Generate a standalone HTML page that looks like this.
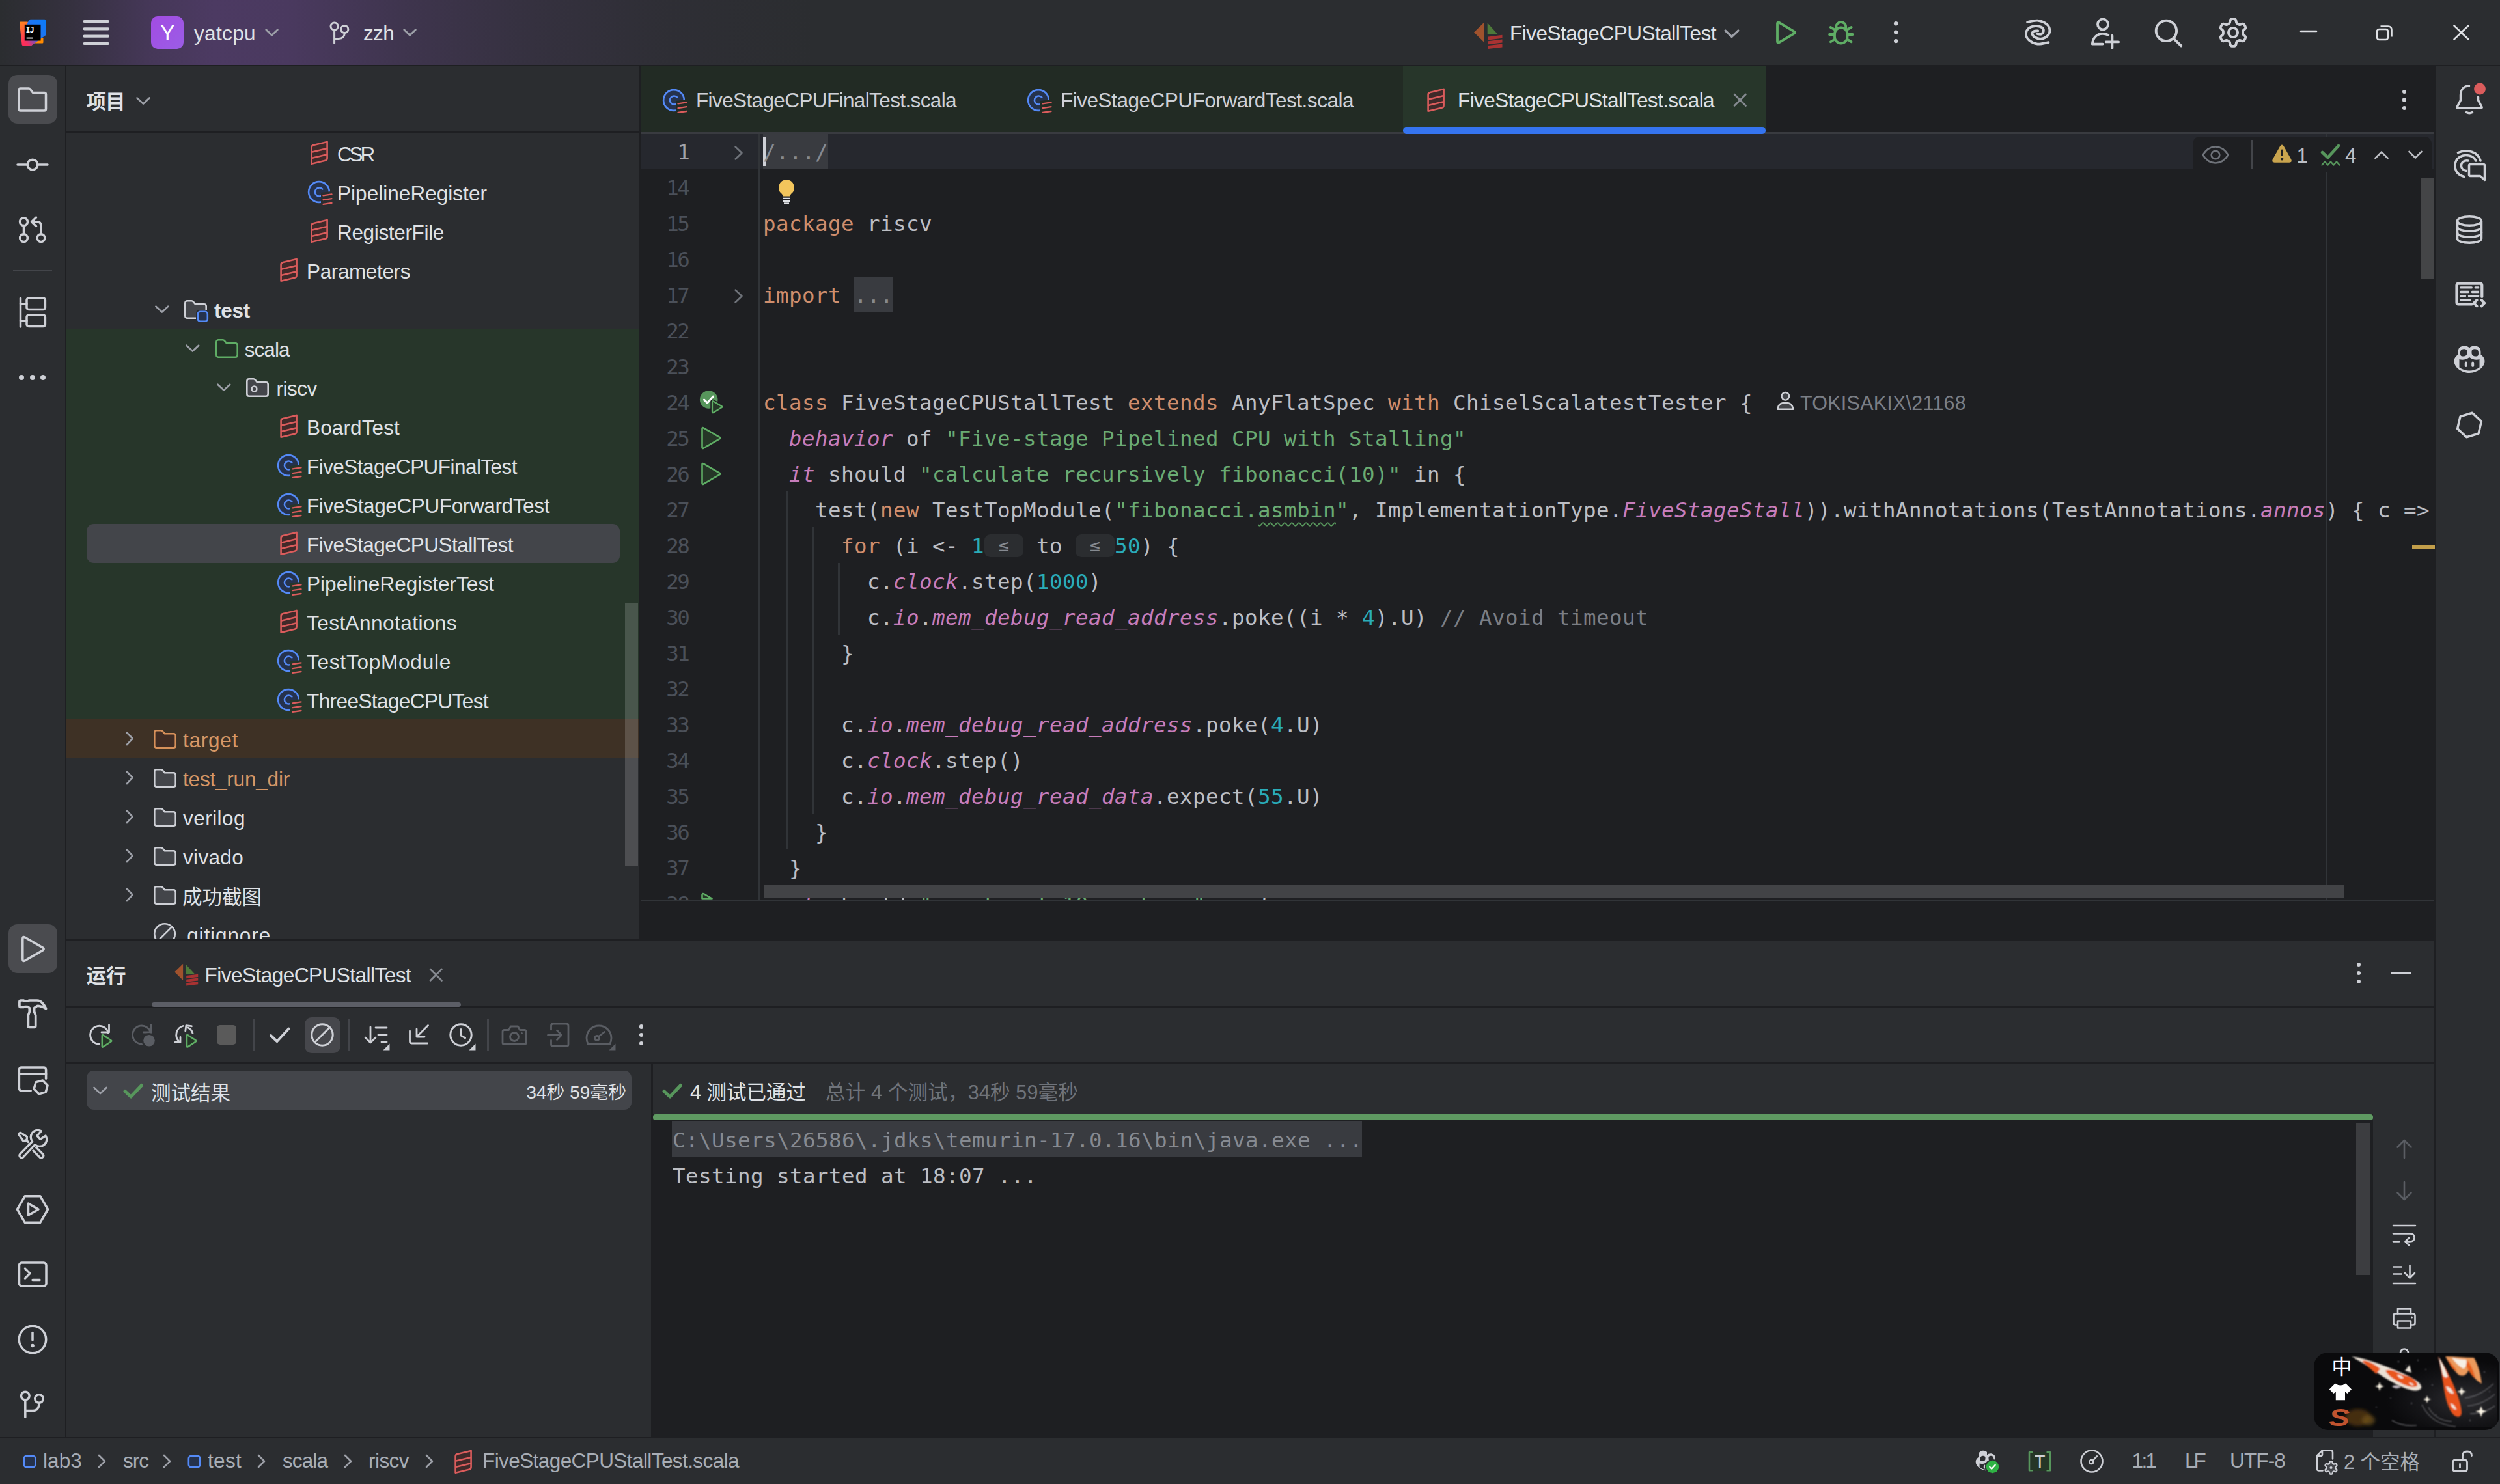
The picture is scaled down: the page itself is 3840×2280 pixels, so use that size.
<!DOCTYPE html>
<html lang="zh-CN"><head><meta charset="utf-8"><title>yatcpu – FiveStageCPUStallTest.scala</title><style>
html,body{margin:0;padding:0;background:#1e1f22;}
body{width:3840px;height:2280px;overflow:hidden;position:relative;font-family:'Liberation Sans','Noto Sans CJK SC',sans-serif;font-size:31.5px;color:#dfe1e5;}
#r{position:absolute;left:0;top:0;width:3840px;height:2280px;overflow:hidden;}
#r>*{position:absolute;}
#r>span{white-space:pre;line-height:40px;height:40px;}
.cl{white-space:pre;font-family:'DejaVu Sans Mono','Liberation Mono','Noto Sans CJK SC',monospace;font-size:32.5px;letter-spacing:0.433px;line-height:58.5px;height:55px;color:#bcbec4;}
.ln{letter-spacing:-2.4px}
.cl u{text-decoration:underline wavy #57965c 2px;text-underline-offset:7px;text-decoration-skip-ink:none}
.cl b.h{display:inline-block;width:60px;height:35px;line-height:33px;margin:0;vertical-align:3px;background:#2b2d30;border-radius:9px;color:#868a91;font-weight:normal;text-align:center;font-size:27px;letter-spacing:0;box-sizing:border-box}
.cl i{font-style:italic;color:#c77dbb;}
.k{color:#cf8e6d}.s{color:#6aab73}.n{color:#2aacb8}.c{color:#7a7e85}
svg{overflow:visible}
</style></head><body><div id="r">
<div style="left:0px;top:0px;width:3840px;height:100px;background:#2b2d30;"></div>
<div style="left:0px;top:0px;width:1300px;height:100px;background:linear-gradient(90deg,rgba(76,58,98,0) 0px,rgba(76,58,98,.300) 110px,rgba(76,58,98,.800) 230px,rgba(76,58,98,1) 330px,rgba(76,58,98,.940) 440px,rgba(76,58,98,.600) 620px,rgba(76,58,98,.300) 820px,rgba(76,58,98,.100) 1020px,rgba(76,58,98,0) 1250px);"></div>
<div style="left:0px;top:100px;width:3840px;height:2.7px;background:#1e1f22;"></div>
<div style="left:0px;top:102px;width:100px;height:2107px;background:#2b2d30;"></div>
<div style="left:100px;top:102px;width:2px;height:2107px;background:#1e1f22;"></div>
<div style="left:102px;top:102px;width:880px;height:1341px;background:#2b2d30;"></div>
<div style="left:102px;top:202px;width:880px;height:3px;background:#1e1f22;"></div>
<div style="left:982px;top:102px;width:3px;height:1343px;background:#1e1f22;"></div>
<div style="left:985px;top:102px;width:2754px;height:1343px;background:#1e1f22;"></div>
<div style="left:3739px;top:102px;width:2px;height:2107px;background:#1e1f22;"></div>
<div style="left:3741px;top:102px;width:99px;height:2107px;background:#2b2d30;"></div>
<div style="left:102px;top:1443px;width:3637px;height:3px;background:#1e1f22;"></div>
<div style="left:102px;top:1446px;width:3637px;height:763px;background:#2b2d30;"></div>
<div style="left:102px;top:1545px;width:3637px;height:3px;background:#1e1f22;"></div>
<div style="left:102px;top:1632px;width:3637px;height:3px;background:#1e1f22;"></div>
<div style="left:0px;top:2207.5px;width:3840px;height:3px;background:#1e1f22;"></div>
<div style="left:0px;top:2210px;width:3840px;height:70px;background:#2b2d30;"></div>
<svg style="left:24px;top:24px;" width="52" height="52" viewBox="0 0 52 52"><defs><linearGradient id="lg1" x1="0" y1="0" x2="0.3" y2="1"><stop offset="0" stop-color="#ff8a1a"/><stop offset=".45" stop-color="#ff5a3c"/><stop offset="1" stop-color="#ff2461"/></linearGradient>
<linearGradient id="lg2" x1="1" y1="0" x2="0" y2="1"><stop offset="0" stop-color="#087cfa"/><stop offset=".52" stop-color="#2472ee"/><stop offset=".72" stop-color="#a0459f"/><stop offset=".88" stop-color="#f5305f"/><stop offset="1" stop-color="#ff2d55"/></linearGradient></defs>
<path d="M7.5 9.5h10.5q1.5 0 1.8 1.5l6 33-2.5 2h-12q-1.5 0-1.7-1.5l-3.6-33q-.2-2 1.5-2z" fill="url(#lg1)"/>
<path d="M31 34h11.5v7q0 1.5-1.5 1.5h-11z" fill="#ff8a00"/>
<path d="M22.5 5.7h22q1.5 0 1.5 1.5v23l-22 16h-12l5-32q2-6 5.5-8.5z" fill="url(#lg2)"/>
<rect x="13.8" y="13.8" width="24.7" height="24.7" fill="#000"/>
<rect x="16.7" y="33.6" width="10.1" height="1.9" fill="#fff"/>
<text x="15.6" y="25.8" font-family="'DejaVu Sans Mono','Liberation Mono',monospace" font-weight="bold" font-size="11.5" fill="#fff" letter-spacing="-0.8">IJ</text></svg>
<svg style="left:120px;top:25px;" width="55" height="50" viewBox="0 0 55 50"><g stroke="#ced0d6" stroke-width="4.2" stroke-linecap="round"><path d="M9.5 8h36.5M9.5 19.3h36.5M9.5 30.7h36.5M9.5 42h36.5"/></g></svg>
<div style="left:232px;top:25px;width:50px;height:50px;background:linear-gradient(135deg,#a24ce2,#9b5de6);border-radius:10px;"></div>
<span style="top:31.07px;font-size:33px;color:#fff;left:246.2px;">Y</span>
<span style="top:31.09px;font-size:31.5px;color:#dfe1e5;left:298px;letter-spacing:0.365px;">yatcpu</span>
<svg style="left:406.94px;top:44.34px;" width="21.12" height="12.32" viewBox="0 0 24 14"><path d="M2 2l10 9.500L22 2" fill="none" stroke="#9da0a8" stroke-width="3.200" stroke-linecap="round" stroke-linejoin="round"/></svg>
<svg style="left:500px;top:28px;" width="50" height="50" viewBox="0 0 50 50"><g fill="none" stroke="#ced0d6" stroke-width="3" stroke-linecap="round"><circle cx="13.6" cy="12.5" r="5.6"/><circle cx="29.3" cy="17" r="5.6"/><path d="M13.6 18.5v20M13.6 31.5h6.5q9 0 9.2-8.7"/></g></svg>
<span style="top:31.09px;font-size:31.5px;color:#dfe1e5;left:558px;letter-spacing:-0.673px;">zzh</span>
<svg style="left:619.44px;top:44.34px;" width="21.12" height="12.32" viewBox="0 0 24 14"><path d="M2 2l10 9.500L22 2" fill="none" stroke="#9da0a8" stroke-width="3.200" stroke-linecap="round" stroke-linejoin="round"/></svg>
<svg style="left:2262px;top:30px;" width="50" height="50" viewBox="0 0 50 50"><path d="M2 19.700L17.600 4.600v30.300z" fill="#a0522d"/><path d="M22.700 5.300l16.100 17.700h-16.100z" fill="#4e7a3a"/>
<g fill="#a83232"><path d="M23.700 26.500l21.800-2.700v5l-21.800 2.700z"/><path d="M23.700 33.300l21.800-2.700v5l-21.800 2.700z"/><path d="M23.700 40.100l21.800-2.700v5l-21.800 2.700z"/></g></svg>
<span style="top:31.09px;font-size:31.5px;color:#dfe1e5;left:2319px;letter-spacing:-0.494px;">FiveStageCPUStallTest</span>
<svg style="left:2648.0px;top:45.0px;" width="24.0" height="14.0" viewBox="0 0 24 14"><path d="M2 2l10 9.500L22 2" fill="none" stroke="#9da0a8" stroke-width="3.200" stroke-linecap="round" stroke-linejoin="round"/></svg>
<svg style="left:2720px;top:28px;" width="50" height="46" viewBox="0 0 50 46"><path d="M10 8.500v27q0 3.300 3 1.600l22.500-13.500q2.500-1.600 0-3.200l-22.500-13.500q-3-1.700-3 1.600z" fill="none" stroke="#5fad65" stroke-width="3.800" stroke-linejoin="round"/></svg>
<svg style="left:2802px;top:24.5px;" width="52" height="50" viewBox="0 0 52 50"><g fill="none" stroke="#5fad65" stroke-width="3.800" stroke-linecap="round"><rect x="16" y="17.500" width="19.500" height="24" rx="9.700"/>
<path d="M18.300 19.500v-3a7.500 7.500 0 0 1 15 0v3"/><path d="M15.500 28h-7.500M36 28h7.500M15.800 20.300l-6-3.300M35.700 20.300l6-3.300M16 35.500l-6.200 3.800M35.500 35.500l6.200 3.800"/></g></svg>
<svg style="left:2908.1000000000004px;top:32.199999999999996px;" width="8.4" height="35.3" viewBox="0 0 8.4 35.3"><circle cx="4.2" cy="4.2" r="3.2" fill="#ced0d6"/><circle cx="4.2" cy="17.599999999999998" r="3.2" fill="#ced0d6"/><circle cx="4.2" cy="31.099999999999998" r="3.2" fill="#ced0d6"/></svg>
<svg style="left:3105px;top:26px;" width="50" height="50" viewBox="0 0 50 50"><g fill="none" stroke="#ced0d6" stroke-width="3.800" stroke-linecap="round"><path d="M9.10 8.10C11.68 7.68 19.62 5.05 24.60 5.60C29.58 6.15 35.88 9.00 39.00 11.40C42.12 13.80 43.07 17.13 43.30 20.00C43.53 22.87 42.57 26.32 40.40 28.60C38.23 30.88 33.53 33.22 30.30 33.70C27.07 34.18 23.28 32.70 21.00 31.50C18.72 30.30 16.97 28.05 16.60 26.50C16.23 24.95 17.35 23.05 18.80 22.20C20.25 21.35 24.22 21.53 25.30 21.40"/><path d="M24.60 26.10C25.55 26.17 28.75 27.28 30.30 26.50C31.85 25.72 33.78 23.15 33.90 21.40C34.02 19.65 33.15 17.20 31.00 16.00C28.85 14.80 24.35 13.90 21.00 14.20C17.65 14.50 13.25 15.75 10.90 17.80C8.55 19.85 6.78 23.50 6.90 26.50C7.02 29.50 8.65 33.28 11.60 35.80C14.55 38.32 19.62 41.05 24.60 41.60C29.58 42.15 38.68 39.52 41.50 39.10"/></g></svg>
<svg style="left:3206px;top:24px;" width="56" height="56" viewBox="0 0 56 56"><g fill="none" stroke="#ced0d6" stroke-width="3.800" stroke-linecap="round" stroke-linejoin="round"><circle cx="24" cy="13.400" r="8"/><path d="M32.300 29.900C29.500 28.400 26.500 27.800 23.600 27.800 14 27.800 8.500 35 7.800 43.600h15.800"/><path d="M38.400 30.700v19.400M28.700 40.400h19.400"/></g></svg>
<svg style="left:3305px;top:26px;" width="54" height="54" viewBox="0 0 54 54"><g fill="none" stroke="#ced0d6" stroke-width="3.900" stroke-linecap="round"><circle cx="22.400" cy="21.400" r="15.700"/><path d="M34 33.600l11.400 10.900"/></g></svg>
<svg style="left:3403px;top:23px;" width="54" height="54" viewBox="0 0 54 54"><g fill="none" stroke="#ced0d6" stroke-width="3.900" stroke-linejoin="round"><path d="M42.10 27.00 L42.10 27.66 L42.10 28.32 L42.15 28.99 L42.38 29.71 L43.08 30.56 L44.39 31.66 L45.63 32.87 L46.15 33.97 L46.14 34.93 L45.89 35.81 L45.53 36.65 L45.10 37.45 L44.62 38.22 L44.07 38.96 L43.44 39.61 L42.61 40.10 L41.40 40.19 L39.73 39.73 L38.13 39.14 L37.04 38.97 L36.30 39.12 L35.69 39.42 L35.12 39.74 L34.55 40.08 L33.98 40.40 L33.41 40.74 L32.85 41.12 L32.34 41.68 L31.95 42.71 L31.66 44.39 L31.23 46.07 L30.54 47.07 L29.70 47.54 L28.82 47.76 L27.91 47.87 L27.00 47.90 L26.09 47.87 L25.18 47.76 L24.30 47.54 L23.46 47.07 L22.77 46.07 L22.34 44.39 L22.05 42.71 L21.66 41.68 L21.15 41.12 L20.59 40.74 L20.02 40.40 L19.45 40.08 L18.88 39.74 L18.31 39.42 L17.70 39.12 L16.96 38.97 L15.87 39.14 L14.27 39.73 L12.60 40.19 L11.39 40.10 L10.56 39.61 L9.93 38.96 L9.38 38.22 L8.90 37.45 L8.47 36.65 L8.11 35.81 L7.86 34.93 L7.85 33.97 L8.37 32.87 L9.61 31.66 L10.92 30.56 L11.62 29.71 L11.85 28.99 L11.90 28.32 L11.90 27.66 L11.90 27.00 L11.90 26.34 L11.90 25.68 L11.85 25.01 L11.62 24.29 L10.92 23.44 L9.61 22.34 L8.37 21.13 L7.85 20.03 L7.86 19.07 L8.11 18.19 L8.47 17.35 L8.90 16.55 L9.38 15.78 L9.93 15.04 L10.56 14.39 L11.39 13.90 L12.60 13.81 L14.27 14.27 L15.87 14.86 L16.96 15.03 L17.70 14.88 L18.31 14.58 L18.88 14.26 L19.45 13.92 L20.02 13.60 L20.59 13.26 L21.15 12.88 L21.66 12.32 L22.05 11.29 L22.34 9.61 L22.77 7.93 L23.46 6.93 L24.30 6.46 L25.18 6.24 L26.09 6.13 L27.00 6.10 L27.91 6.13 L28.82 6.24 L29.70 6.46 L30.54 6.93 L31.23 7.93 L31.66 9.61 L31.95 11.29 L32.34 12.32 L32.85 12.88 L33.41 13.26 L33.98 13.60 L34.55 13.92 L35.12 14.26 L35.69 14.58 L36.30 14.88 L37.04 15.03 L38.13 14.86 L39.73 14.27 L41.40 13.81 L42.61 13.90 L43.44 14.39 L44.07 15.04 L44.62 15.78 L45.10 16.55 L45.53 17.35 L45.89 18.19 L46.14 19.07 L46.15 20.03 L45.63 21.13 L44.39 22.34 L43.08 23.44 L42.38 24.29 L42.15 25.01 L42.10 25.68 L42.10 26.34z"/><circle cx="27" cy="27" r="7.100"/></g></svg>
<svg style="left:3530px;top:40px;" width="32" height="16" viewBox="0 0 32 16"><path d="M4 8h24" stroke="#dfe1e5" stroke-width="2.600" stroke-linecap="round"/></svg>
<svg style="left:3644px;top:34px;" width="36" height="32" viewBox="0 0 36 32"><g fill="none" stroke="#dfe1e5" stroke-width="2.600"><rect x="7" y="11" width="17" height="16" rx="3.500"/><path d="M12.500 6.500H24q5.500 0 5.500 5.500v10.500"/></g></svg>
<svg style="left:3764px;top:34px;" width="34" height="32" viewBox="0 0 34 32"><path d="M5.500 5.500l22 21M27.500 5.500l-22 21" stroke="#dfe1e5" stroke-width="2.600" stroke-linecap="round"/></svg>
<div style="left:12.5px;top:115px;width:75px;height:75px;background:#4a4b4f;border-radius:14px;"></div>
<svg style="left:20px;top:123px;" width="60" height="60" viewBox="0 0 60 60"><g fill="none" stroke="#ced0d6" stroke-width="3.5" stroke-linecap="round" stroke-linejoin="round" ><path d="M9 15.500q0-2.500 2.500-2.500h12.500q1.500 0 2.300 1l4.200 5.500h17.500q2.500 0 2.500 2.500v22.500q0 2.500-2.500 2.500h-36.500q-2.500 0-2.500-2.500z"/></g></svg>
<svg style="left:20px;top:223px;" width="60" height="60" viewBox="0 0 60 60"><g fill="none" stroke="#ced0d6" stroke-width="3.5" stroke-linecap="round" stroke-linejoin="round" ><path d="M7 30h13.500M39.500 30h13.500"/><circle cx="30" cy="30" r="7.800"/></g></svg>
<svg style="left:20px;top:323px;" width="60" height="60" viewBox="0 0 60 60"><g fill="none" stroke="#ced0d6" stroke-width="3.5" stroke-linecap="round" stroke-linejoin="round" ><circle cx="16.500" cy="17.700" r="5.900"/><circle cx="16.500" cy="42.600" r="5.900"/><circle cx="43" cy="42.600" r="5.900"/><path d="M16.500 23.600v13.100"/><path d="M43 36.700v-13q0-6-6-6h-7.500"/><path d="M35.500 11l-7 6.700l7 6.700"/></g></svg>
<div style="left:20px;top:415px;width:60px;height:2px;background:#43454a;"></div>
<svg style="left:20px;top:450px;" width="60" height="60" viewBox="0 0 60 60"><g fill="none" stroke="#ced0d6" stroke-width="3.5" stroke-linecap="round" stroke-linejoin="round" ><path d="M11.500 8v44"/><rect x="21" y="8" width="28.400" height="17.500" rx="3"/><rect x="21" y="34" width="28.400" height="17.500" rx="3"/><path d="M11.500 16.700h9.500M11.500 42.700h9.500"/></g></svg>
<div style="left:29.299999999999997px;top:575.7px;width:8px;height:8px;background:#ced0d6;border-radius:50%;"></div>
<div style="left:45.8px;top:575.7px;width:8px;height:8px;background:#ced0d6;border-radius:50%;"></div>
<div style="left:62.2px;top:575.7px;width:8px;height:8px;background:#ced0d6;border-radius:50%;"></div>
<div style="left:12.5px;top:1420px;width:75px;height:75px;background:#4a4b4f;border-radius:14px;"></div>
<svg style="left:20px;top:1427.5px;" width="60" height="60" viewBox="0 0 60 60"><g fill="none" stroke="#ced0d6" stroke-width="3.5" stroke-linecap="round" stroke-linejoin="round" ><path d="M14.800 14v32q0 3.800 3.400 2l27.500-16q3-2 0-4l-27.500-16q-3.400-1.800-3.400 2z"/></g></svg>
<svg style="left:20px;top:1528px;" width="60" height="60" viewBox="0 0 60 60"><g fill="none" stroke="#ced0d6" stroke-width="3.7" stroke-linecap="round" stroke-linejoin="round" ><path d="M12 9h3.900l2.100 1.100h4.300l2.700-1.100h11.900q4.500 0 7 2.900 3 3 4.900 6l1.800 3.700q-3-2-6.700-3.200-3-.9-5.400-1.100-1.200-.1-2.100.6l-3.800 2.700v5.900l2.100 5.400v16.600q0 2-2 2h-7.300q-2 0-2-2v-16.600l1.900-5.400v-5.900l-3-1.900h-4.300l-2.100.8h-3.900q-2.100 0-2.100-2.100v-6.300q0-2.100 2.100-2.100z"/></g></svg>
<svg style="left:20px;top:1629px;" width="60" height="60" viewBox="0 0 60 60"><g fill="none" stroke="#ced0d6" stroke-width="3.5" stroke-linecap="round" stroke-linejoin="round" ><path d="M27.200 46.800h-13.800q-4 0-4-4v-27.900q0-4 4-4h33.200q4 0 4 4v13.300"/><path d="M9.400 20.900h41.200"/><path d="M53.08 38.79 L50.10 49.17 L39.62 51.78 L32.12 44.01 L35.10 33.63 L45.58 31.02z"/></g></svg>
<svg style="left:20px;top:1728px;" width="60" height="60" viewBox="0 0 60 60"><g fill="none" stroke="#ced0d6" stroke-width="3.3" stroke-linecap="round" stroke-linejoin="round" ><path d="M43.400 9.700l-6.500 7.500 4.900 5.100 8.300-5.300a10.800 10.800 0 0 1-16.400 13.700l-17.800 18.900a3.400 3.400 0 0 1-5.100-4.600l18.800-19.200a10.800 10.800 0 0 1 13.800-16.100z"/><path d="M11.800 12.400l9.500 5.900v4l-1.900 2.200h-4.100l-6.200-9.200q-.8-2.300 2.700-2.900z"/><path d="M20.700 24l2.700 2.700"/><path d="M35.600 35l10.500 10.500a3.400 3.400 0 0 1-4.900 4.600l-10.200-10.200"/></g></svg>
<svg style="left:20px;top:1828px;" width="60" height="60" viewBox="0 0 60 60"><g fill="none" stroke="#ced0d6" stroke-width="3.5" stroke-linecap="round" stroke-linejoin="round" ><path d="M53.50 30.00 L41.75 50.35 L18.25 50.35 L6.50 30.00 L18.25 9.65 L41.75 9.65z" /><path d="M23.500 21v18l15.500-9z"/></g></svg>
<svg style="left:20px;top:1928px;" width="60" height="60" viewBox="0 0 60 60"><g fill="none" stroke="#ced0d6" stroke-width="3.5" stroke-linecap="round" stroke-linejoin="round" ><rect x="9.500" y="12" width="41.500" height="36" rx="4"/><path d="M18.500 21l7.500 7.500-7.500 7.500M30 38.500h11"/></g></svg>
<svg style="left:20px;top:2028px;" width="60" height="60" viewBox="0 0 60 60"><g fill="none" stroke="#ced0d6" stroke-width="3.5" stroke-linecap="round" stroke-linejoin="round" ><circle cx="30" cy="30" r="20.700"/><path d="M30 19.500v11.500"/></g><circle cx="30" cy="39.500" r="2.800" fill="#ced0d6"/></svg>
<svg style="left:20px;top:2128px;" width="60" height="60" viewBox="0 0 60 60"><g fill="none" stroke="#ced0d6" stroke-width="3.5" stroke-linecap="round" stroke-linejoin="round" ><circle cx="18.800" cy="16.500" r="6.300"/><circle cx="40" cy="21" r="6.300"/><path d="M18.800 23v26.500M18.800 39.500h12q9 0 9.200-12"/></g></svg>
<svg style="left:3763px;top:122px;" width="60" height="60" viewBox="0 0 60 60"><g fill="none" stroke="#ced0d6" stroke-width="3.5" stroke-linecap="round" stroke-linejoin="round" ><path d="M29.500 10c-8.500 0-13 6-13 14.500v7.500l-5.500 10.500q-.5 1.500 1 1.500h36q1.500 0 1-1.500l-5.500-10.500v-5"/><path d="M25.500 50.500q4.500 2.500 9 0"/></g><circle cx="46" cy="14.500" r="9" fill="#db5c5c"/></svg>
<svg style="left:3763px;top:225px;" width="60" height="60" viewBox="0 0 60 60"><g fill="none" stroke="#ced0d6" stroke-width="3.5" stroke-linecap="round" stroke-linejoin="round" ><path d="M12.500 9.500c14-6 31-1.500 34.500 12.500"/><path d="M22 46.500c-9.500-2.500-14-9-14-17 0-11.500 10.500-18 21.500-15.500 5 1.200 8.500 4 10.500 8"/><path d="M25.500 37.500c-5-.5-8-4-8-8 0-5.500 5.500-8.500 10.500-7.500"/><path d="M31.500 27.500h20q2 0 2 2v22l-7-6h-15q-2 0-2-2v-14q0-2 2-2z" fill="#2b2d30"/></g></svg>
<svg style="left:3763px;top:323px;" width="60" height="60" viewBox="0 0 60 60"><g fill="none" stroke="#ced0d6" stroke-width="3.5" stroke-linecap="round" stroke-linejoin="round" ><ellipse cx="30" cy="16.500" rx="18.500" ry="6.800"/><path d="M11.500 16.500v27c0 4 8.300 6.800 18.500 6.800s18.500-2.800 18.500-6.800v-27"/><path d="M11.500 25.500c0 4 8.300 6.800 18.500 6.800s18.500-2.800 18.500-6.800M11.500 34.500c0 4 8.300 6.800 18.500 6.800s18.500-2.800 18.500-6.800"/></g></svg>
<svg style="left:3763px;top:422px;" width="60" height="60" viewBox="0 0 60 60"><g fill="none" stroke="#ced0d6" stroke-width="4.2" stroke-linecap="round" stroke-linejoin="round" ><path d="M33.800 45.500h-20.300q-3 0-3-3v-25.900q0-3 3-3h32.800q3 0 3 3v17.400"/></g><g fill="none" stroke="#ced0d6" stroke-width="3.3" stroke-linecap="round" stroke-linejoin="round" ><path d="M16.800 19.900h16.500M39.200 19.900h4.500M16.800 26.500h11.600M34.300 26.500h9.400M16.800 32.800h6.700M29.400 32.800h14.300M16.800 39.200h14.500"/></g><g fill="none" stroke="#ced0d6" stroke-width="4" stroke-linecap="round" stroke-linejoin="round" ><path d="M41.500 39l-4.700 4.700 4.700 4.700M48.500 39l4.700 4.700-4.700 4.700"/></g></svg>
<svg style="left:3763px;top:523px;" width="60" height="60" viewBox="0 0 60 60"><path d="M30 11.500c3-3 7-3.500 11-2.500 5 1.300 6.500 4.500 6.500 9.500v3.500c3 2 6 5.500 6 9.500 0 11-13 18.500-23.500 18.500s-23.500-7.500-23.500-18.500c0-4 3-7.500 6-9.500v-3.500c0-5 1.500-8.200 6.500-9.500 4-1 8-.5 11 2.500z" fill="#ced0d6"/><path d="M20 13.500c3.500-.8 6.500.3 6.500 3.500v2.500c0 3-2.500 5-6.500 5-3.500 0-4-1.800-4-5 0-3.500.8-5.200 4-6zM40 13.500c-3.500-.8-6.500.3-6.500 3.500v2.500c0 3 2.500 5 6.500 5 3.500 0 4-1.800 4-5 0-3.500-.8-5.200-4-6z" fill="#2b2d30"/><path d="M14.500 29c4.500 1.500 11.500.5 15.500-3 4 3.500 11 4.500 15.500 3v12.500c-4.500 3.500-10.500 5-15.500 5s-11-1.500-15.500-5z" fill="#2b2d30"/><rect x="22.800" y="32.500" width="4" height="8.500" rx="2" fill="#ced0d6"/><rect x="33.200" y="32.500" width="4" height="8.500" rx="2" fill="#ced0d6"/></svg>
<svg style="left:3763px;top:623px;" width="60" height="60" viewBox="0 0 60 60"><g fill="none" stroke="#ced0d6" stroke-width="3.5" stroke-linecap="round" stroke-linejoin="round" ><path d="M48.36 24.39 L44.04 43.09 L25.68 48.71 L11.64 35.61 L15.96 16.91 L34.32 11.29z"/></g></svg>
<span style="top:135.93px;font-size:30.5px;color:#dfe1e5;left:132.5px;font-weight:bold;letter-spacing:-1.000px;">项目</span>
<svg style="left:208px;top:148px;" width="24" height="14" viewBox="0 0 24 14"><path d="M2.500 2.500l9.500 9 9.500-9" fill="none" stroke="#9da0a8" stroke-width="2.800" stroke-linecap="round" stroke-linejoin="round"/></svg>
<div style="left:102px;top:505px;width:880px;height:600px;background:#27362a;"></div>
<div style="left:102px;top:1105px;width:880px;height:60px;background:#3e3125;"></div>
<div style="left:133px;top:805px;width:819px;height:60px;background:#43454a;border-radius:11px;"></div>
<svg style="left:476px;top:216px;" width="30" height="38" viewBox="0 0 30 38"><path d="M2.600 10.500q0-3 3-3.400l21-5.200v25q0 3.200-3.200 3.800l-20.800 5.100z" fill="#402929" stroke="#db5c5c" stroke-width="2.600" stroke-linejoin="round"/><path d="M2.600 17.800l24-5.800M2.600 27l24-5.800" stroke="#db5c5c" stroke-width="2.600" fill="none"/></svg>
<span style="top:217.09px;font-size:31.5px;color:#dfe1e5;left:518px;letter-spacing:-4.169px;">CSR</span>
<svg style="left:469.7px;top:264px;" width="46" height="60" viewBox="0 0 46 60"><circle cx="20" cy="31" r="15.900" fill="#25324d" stroke="#548af7" stroke-width="2.600"/><path d="M25.300 26.500a6.600 6.600 0 1 0 0 9" fill="none" stroke="#548af7" stroke-width="2.500" stroke-linecap="round"/><path d="M23 32l18-2.300v20l-18 2.300z" fill="#2b2d30"/><g stroke="#db5c5c" stroke-width="2.300" stroke-linecap="round"><path d="M26.500 36.300l13-1.900M26.500 43.100l13-1.900M26.500 49.900l13-1.900"/></g></svg>
<span style="top:277.09px;font-size:31.5px;color:#dfe1e5;left:518px;letter-spacing:0.039px;">PipelineRegister</span>
<svg style="left:476px;top:336px;" width="30" height="38" viewBox="0 0 30 38"><path d="M2.600 10.500q0-3 3-3.400l21-5.200v25q0 3.200-3.200 3.800l-20.800 5.100z" fill="#402929" stroke="#db5c5c" stroke-width="2.600" stroke-linejoin="round"/><path d="M2.600 17.800l24-5.800M2.600 27l24-5.800" stroke="#db5c5c" stroke-width="2.600" fill="none"/></svg>
<span style="top:337.09px;font-size:31.5px;color:#dfe1e5;left:518px;letter-spacing:-0.338px;">RegisterFile</span>
<svg style="left:429.2px;top:396px;" width="30" height="38" viewBox="0 0 30 38"><path d="M2.600 10.500q0-3 3-3.400l21-5.200v25q0 3.200-3.200 3.800l-20.800 5.100z" fill="#402929" stroke="#db5c5c" stroke-width="2.600" stroke-linejoin="round"/><path d="M2.600 17.800l24-5.800M2.600 27l24-5.800" stroke="#db5c5c" stroke-width="2.600" fill="none"/></svg>
<span style="top:397.09px;font-size:31.5px;color:#dfe1e5;left:471px;letter-spacing:-0.381px;">Parameters</span>
<svg style="left:429.2px;top:636px;" width="30" height="38" viewBox="0 0 30 38"><path d="M2.600 10.500q0-3 3-3.400l21-5.200v25q0 3.200-3.200 3.800l-20.800 5.100z" fill="#402929" stroke="#db5c5c" stroke-width="2.600" stroke-linejoin="round"/><path d="M2.600 17.800l24-5.800M2.600 27l24-5.800" stroke="#db5c5c" stroke-width="2.600" fill="none"/></svg>
<span style="top:637.09px;font-size:31.5px;color:#dfe1e5;left:471px;letter-spacing:0.130px;">BoardTest</span>
<svg style="left:422.7px;top:684px;" width="46" height="60" viewBox="0 0 46 60"><circle cx="20" cy="31" r="15.900" fill="#25324d" stroke="#548af7" stroke-width="2.600"/><path d="M25.300 26.500a6.600 6.600 0 1 0 0 9" fill="none" stroke="#548af7" stroke-width="2.500" stroke-linecap="round"/><path d="M23 32l18-2.300v20l-18 2.300z" fill="#27362a"/><g stroke="#db5c5c" stroke-width="2.300" stroke-linecap="round"><path d="M26.500 36.300l13-1.900M26.500 43.100l13-1.900M26.500 49.900l13-1.900"/></g></svg>
<span style="top:697.09px;font-size:31.5px;color:#dfe1e5;left:471px;letter-spacing:-0.542px;">FiveStageCPUFinalTest</span>
<svg style="left:422.7px;top:744px;" width="46" height="60" viewBox="0 0 46 60"><circle cx="20" cy="31" r="15.900" fill="#25324d" stroke="#548af7" stroke-width="2.600"/><path d="M25.300 26.500a6.600 6.600 0 1 0 0 9" fill="none" stroke="#548af7" stroke-width="2.500" stroke-linecap="round"/><path d="M23 32l18-2.300v20l-18 2.300z" fill="#27362a"/><g stroke="#db5c5c" stroke-width="2.300" stroke-linecap="round"><path d="M26.500 36.300l13-1.900M26.500 43.100l13-1.900M26.500 49.900l13-1.900"/></g></svg>
<span style="top:757.09px;font-size:31.5px;color:#dfe1e5;left:471px;letter-spacing:-0.375px;">FiveStageCPUForwardTest</span>
<svg style="left:429.2px;top:816px;" width="30" height="38" viewBox="0 0 30 38"><path d="M2.600 10.500q0-3 3-3.400l21-5.200v25q0 3.200-3.200 3.800l-20.800 5.100z" fill="#402929" stroke="#db5c5c" stroke-width="2.600" stroke-linejoin="round"/><path d="M2.600 17.800l24-5.800M2.600 27l24-5.800" stroke="#db5c5c" stroke-width="2.600" fill="none"/></svg>
<span style="top:817.09px;font-size:31.5px;color:#dfe1e5;left:471px;letter-spacing:-0.494px;">FiveStageCPUStallTest</span>
<svg style="left:422.7px;top:864px;" width="46" height="60" viewBox="0 0 46 60"><circle cx="20" cy="31" r="15.900" fill="#25324d" stroke="#548af7" stroke-width="2.600"/><path d="M25.300 26.500a6.600 6.600 0 1 0 0 9" fill="none" stroke="#548af7" stroke-width="2.500" stroke-linecap="round"/><path d="M23 32l18-2.300v20l-18 2.300z" fill="#27362a"/><g stroke="#db5c5c" stroke-width="2.300" stroke-linecap="round"><path d="M26.500 36.300l13-1.900M26.500 43.100l13-1.900M26.500 49.900l13-1.900"/></g></svg>
<span style="top:877.09px;font-size:31.5px;color:#dfe1e5;left:471px;letter-spacing:0.043px;">PipelineRegisterTest</span>
<svg style="left:429.2px;top:936px;" width="30" height="38" viewBox="0 0 30 38"><path d="M2.600 10.500q0-3 3-3.400l21-5.200v25q0 3.200-3.200 3.800l-20.800 5.100z" fill="#402929" stroke="#db5c5c" stroke-width="2.600" stroke-linejoin="round"/><path d="M2.600 17.800l24-5.800M2.600 27l24-5.800" stroke="#db5c5c" stroke-width="2.600" fill="none"/></svg>
<span style="top:937.09px;font-size:31.5px;color:#dfe1e5;left:471px;letter-spacing:0.457px;">TestAnnotations</span>
<svg style="left:422.7px;top:984px;" width="46" height="60" viewBox="0 0 46 60"><circle cx="20" cy="31" r="15.900" fill="#25324d" stroke="#548af7" stroke-width="2.600"/><path d="M25.300 26.500a6.600 6.600 0 1 0 0 9" fill="none" stroke="#548af7" stroke-width="2.500" stroke-linecap="round"/><path d="M23 32l18-2.300v20l-18 2.300z" fill="#27362a"/><g stroke="#db5c5c" stroke-width="2.300" stroke-linecap="round"><path d="M26.500 36.300l13-1.900M26.500 43.100l13-1.900M26.500 49.900l13-1.900"/></g></svg>
<span style="top:997.09px;font-size:31.5px;color:#dfe1e5;left:471px;letter-spacing:0.779px;">TestTopModule</span>
<svg style="left:422.7px;top:1044px;" width="46" height="60" viewBox="0 0 46 60"><circle cx="20" cy="31" r="15.900" fill="#25324d" stroke="#548af7" stroke-width="2.600"/><path d="M25.300 26.500a6.600 6.600 0 1 0 0 9" fill="none" stroke="#548af7" stroke-width="2.500" stroke-linecap="round"/><path d="M23 32l18-2.300v20l-18 2.300z" fill="#27362a"/><g stroke="#db5c5c" stroke-width="2.300" stroke-linecap="round"><path d="M26.500 36.300l13-1.900M26.500 43.100l13-1.900M26.500 49.900l13-1.900"/></g></svg>
<span style="top:1057.09px;font-size:31.5px;color:#dfe1e5;left:471px;letter-spacing:-0.581px;">ThreeStageCPUTest</span>
<svg style="left:237.5px;top:469px;" width="22" height="14" viewBox="0 0 22 14"><path d="M1.500 1.800l9.300 8.800 9.300-8.800" fill="none" stroke="#9da0a8" stroke-width="2.700" stroke-linecap="round" stroke-linejoin="round"/></svg>
<svg style="left:282.7px;top:459.8px;" width="40" height="40" viewBox="0 0 40 40"><path d="M1.300 5.500q0-3.200 3.200-3.200h6.800q1.500 0 2.400 1.100l3.300 3.900h13.500q3.200 0 3.200 3.200v15q0 3.200-3.200 3.200h-26q-3.200 0-3.200-3.200z" fill="#43454a" stroke="#ced0d6" stroke-width="2.600" stroke-linejoin="round"/><rect x="18" y="16" width="20" height="20" rx="5" fill="#2b2d30"/><rect x="20.800" y="18.800" width="15" height="15" rx="3.800" fill="#25324d" stroke="#548af7" stroke-width="2.600"/></svg>
<span style="top:457.09px;font-size:31.5px;color:#dfe1e5;left:329px;font-weight:bold;letter-spacing:-0.254px;">test</span>
<svg style="left:284.5px;top:529px;" width="22" height="14" viewBox="0 0 22 14"><path d="M1.500 1.800l9.300 8.800 9.300-8.800" fill="none" stroke="#9da0a8" stroke-width="2.700" stroke-linecap="round" stroke-linejoin="round"/></svg>
<svg style="left:330.8px;top:519.8px;" width="40" height="40" viewBox="0 0 40 40"><path d="M1.300 5.500q0-3.200 3.200-3.200h6.800q1.500 0 2.400 1.100l3.300 3.900h13.500q3.200 0 3.200 3.200v15q0 3.200-3.200 3.200h-26q-3.200 0-3.200-3.200z" fill="#223326" stroke="#5fad65" stroke-width="2.600" stroke-linejoin="round"/></svg>
<span style="top:517.09px;font-size:31.5px;color:#dfe1e5;left:375.7px;letter-spacing:-0.907px;">scala</span>
<svg style="left:332.5px;top:589px;" width="22" height="14" viewBox="0 0 22 14"><path d="M1.500 1.800l9.300 8.800 9.300-8.800" fill="none" stroke="#9da0a8" stroke-width="2.700" stroke-linecap="round" stroke-linejoin="round"/></svg>
<svg style="left:378.0px;top:579.8px;" width="40" height="40" viewBox="0 0 40 40"><path d="M1.300 5.500q0-3.200 3.200-3.200h6.800q1.500 0 2.400 1.100l3.300 3.900h13.500q3.200 0 3.200 3.200v15q0 3.200-3.200 3.200h-26q-3.200 0-3.200-3.200z" fill="#43454a" stroke="#ced0d6" stroke-width="2.600" stroke-linejoin="round"/><circle cx="12.500" cy="17.500" r="3.900" fill="none" stroke="#ced0d6" stroke-width="2.500"/></svg>
<span style="top:577.09px;font-size:31.5px;color:#dfe1e5;left:424.6px;letter-spacing:-0.548px;">riscv</span>
<svg style="left:192.5px;top:1124px;" width="14" height="22" viewBox="0 0 14 22"><path d="M1.800 1.500l8.800 9.300-8.800 9.300" fill="none" stroke="#9da0a8" stroke-width="2.700" stroke-linecap="round" stroke-linejoin="round"/></svg>
<svg style="left:235.8px;top:1119.8px;" width="40" height="40" viewBox="0 0 40 40"><path d="M1.300 5.500q0-3.200 3.200-3.200h6.800q1.500 0 2.400 1.100l3.300 3.900h13.500q3.200 0 3.200 3.200v15q0 3.200-3.200 3.200h-26q-3.200 0-3.200-3.200z" fill="#402c24" stroke="#d6905a" stroke-width="2.600" stroke-linejoin="round"/></svg>
<span style="top:1117.09px;font-size:31.5px;color:#d69766;left:281px;letter-spacing:0.742px;">target</span>
<svg style="left:192.5px;top:1184px;" width="14" height="22" viewBox="0 0 14 22"><path d="M1.800 1.500l8.800 9.300-8.800 9.300" fill="none" stroke="#9da0a8" stroke-width="2.700" stroke-linecap="round" stroke-linejoin="round"/></svg>
<svg style="left:235.8px;top:1179.8px;" width="40" height="40" viewBox="0 0 40 40"><path d="M1.300 5.500q0-3.200 3.200-3.200h6.800q1.500 0 2.400 1.100l3.300 3.900h13.500q3.200 0 3.200 3.200v15q0 3.200-3.200 3.200h-26q-3.200 0-3.200-3.200z" fill="#43454a" stroke="#ced0d6" stroke-width="2.600" stroke-linejoin="round"/></svg>
<span style="top:1177.09px;font-size:31.5px;color:#d69766;left:281px;letter-spacing:-0.195px;">test_run_dir</span>
<svg style="left:192.5px;top:1244px;" width="14" height="22" viewBox="0 0 14 22"><path d="M1.800 1.500l8.800 9.300-8.800 9.300" fill="none" stroke="#9da0a8" stroke-width="2.700" stroke-linecap="round" stroke-linejoin="round"/></svg>
<svg style="left:235.8px;top:1239.8px;" width="40" height="40" viewBox="0 0 40 40"><path d="M1.300 5.500q0-3.200 3.200-3.200h6.800q1.500 0 2.400 1.100l3.300 3.900h13.500q3.200 0 3.200 3.200v15q0 3.200-3.200 3.200h-26q-3.200 0-3.200-3.200z" fill="#43454a" stroke="#ced0d6" stroke-width="2.600" stroke-linejoin="round"/></svg>
<span style="top:1237.09px;font-size:31.5px;color:#dfe1e5;left:281px;letter-spacing:0.458px;">verilog</span>
<svg style="left:192.5px;top:1304px;" width="14" height="22" viewBox="0 0 14 22"><path d="M1.800 1.500l8.800 9.300-8.800 9.300" fill="none" stroke="#9da0a8" stroke-width="2.700" stroke-linecap="round" stroke-linejoin="round"/></svg>
<svg style="left:235.8px;top:1299.8px;" width="40" height="40" viewBox="0 0 40 40"><path d="M1.300 5.500q0-3.200 3.200-3.200h6.800q1.500 0 2.400 1.100l3.300 3.900h13.500q3.200 0 3.200 3.200v15q0 3.200-3.200 3.200h-26q-3.200 0-3.200-3.200z" fill="#43454a" stroke="#ced0d6" stroke-width="2.600" stroke-linejoin="round"/></svg>
<span style="top:1297.09px;font-size:31.5px;color:#dfe1e5;left:281px;letter-spacing:0.324px;">vivado</span>
<svg style="left:192.5px;top:1364px;" width="14" height="22" viewBox="0 0 14 22"><path d="M1.800 1.500l8.800 9.300-8.800 9.300" fill="none" stroke="#9da0a8" stroke-width="2.700" stroke-linecap="round" stroke-linejoin="round"/></svg>
<svg style="left:235.8px;top:1359.8px;" width="40" height="40" viewBox="0 0 40 40"><path d="M1.300 5.500q0-3.200 3.200-3.200h6.800q1.500 0 2.400 1.100l3.300 3.900h13.500q3.200 0 3.200 3.200v15q0 3.200-3.200 3.200h-26q-3.200 0-3.200-3.200z" fill="#43454a" stroke="#ced0d6" stroke-width="2.600" stroke-linejoin="round"/></svg>
<span style="top:1358.43px;font-size:30.5px;color:#dfe1e5;left:280px;letter-spacing:0.000px;">成功截图</span>
<div style="left:102px;top:1404px;width:880px;height:39px;overflow:hidden;"><svg style="position:absolute;left:132px;top:12px" width="40" height="40" viewBox="0 0 40 40"><circle cx="19" cy="19" r="15.800" fill="#393b40" stroke="#ced0d6" stroke-width="2.600"/><path d="M8 30l22-22" stroke="#ced0d6" stroke-width="2.600"/></svg><span style="position:absolute;left:175.500px;top:12.800px;line-height:40px;white-space:pre;letter-spacing:0.900px;">.gitignore</span></div>
<div style="left:960px;top:926px;width:20px;height:404px;background:rgba(255,255,255,0.160);"></div>
<div style="left:985px;top:102px;width:1170px;height:101px;background:#222b24;"></div>
<div style="left:2155px;top:102px;width:557px;height:101px;background:#27362a;"></div>
<div style="left:985px;top:203px;width:2754px;height:2.5px;background:#393b40;"></div>
<div style="left:2155px;top:195px;width:557px;height:10.5px;background:#3574f0;border-radius:5px;"></div>
<svg style="left:1015px;top:122.5px;" width="46" height="60" viewBox="0 0 46 60"><circle cx="20" cy="31" r="15.900" fill="#25324d" stroke="#548af7" stroke-width="2.600"/><path d="M25.300 26.500a6.600 6.600 0 1 0 0 9" fill="none" stroke="#548af7" stroke-width="2.500" stroke-linecap="round"/><path d="M23 32l18-2.300v20l-18 2.300z" fill="#222b24"/><g stroke="#db5c5c" stroke-width="2.300" stroke-linecap="round"><path d="M26.500 36.300l13-1.900M26.500 43.100l13-1.900M26.500 49.900l13-1.900"/></g></svg>
<span style="top:134.09px;font-size:31.5px;color:#ced0d6;left:1069px;letter-spacing:-0.617px;">FiveStageCPUFinalTest.scala</span>
<svg style="left:1574.5px;top:122.5px;" width="46" height="60" viewBox="0 0 46 60"><circle cx="20" cy="31" r="15.900" fill="#25324d" stroke="#548af7" stroke-width="2.600"/><path d="M25.300 26.500a6.600 6.600 0 1 0 0 9" fill="none" stroke="#548af7" stroke-width="2.500" stroke-linecap="round"/><path d="M23 32l18-2.300v20l-18 2.300z" fill="#222b24"/><g stroke="#db5c5c" stroke-width="2.300" stroke-linecap="round"><path d="M26.500 36.300l13-1.900M26.500 43.100l13-1.900M26.500 49.900l13-1.900"/></g></svg>
<span style="top:134.09px;font-size:31.5px;color:#ced0d6;left:1629px;letter-spacing:-0.480px;">FiveStageCPUForwardTest.scala</span>
<svg style="left:2191px;top:135px;" width="30" height="38" viewBox="0 0 30 38"><path d="M2.600 10.500q0-3 3-3.400l21-5.200v25q0 3.200-3.200 3.800l-20.800 5.100z" fill="#402929" stroke="#db5c5c" stroke-width="2.600" stroke-linejoin="round"/><path d="M2.600 17.800l24-5.800M2.600 27l24-5.800" stroke="#db5c5c" stroke-width="2.600" fill="none"/></svg>
<span style="top:134.09px;font-size:31.5px;color:#dfe1e5;left:2239px;letter-spacing:-0.580px;">FiveStageCPUStallTest.scala</span>
<svg style="left:2660px;top:141px;" width="26" height="26" viewBox="0 0 26 26"><path d="M4 4l17.500 17.500M21.500 4l-17.500 17.500" stroke="#868a91" stroke-width="2.600" stroke-linecap="round"/></svg>
<div style="left:3689.8px;top:137.8px;width:6.4px;height:6.4px;background:#ced0d6;border-radius:50%;"></div>
<div style="left:3689.8px;top:150.3px;width:6.4px;height:6.4px;background:#ced0d6;border-radius:50%;"></div>
<div style="left:3689.8px;top:162.8px;width:6.4px;height:6.4px;background:#ced0d6;border-radius:50%;"></div>
<div style="left:985px;top:206px;width:2754px;height:54px;background:#26282e;"></div>
<div style="left:1165px;top:206px;width:2.6px;height:1176px;background:#313438;"></div>
<div style="left:3572px;top:206px;width:3px;height:1176px;background:#313438;"></div>
<div style="left:1171.5px;top:206px;width:100.5px;height:54px;background:#393b40;"></div>
<div style="left:1312px;top:425px;width:60px;height:55px;background:#393b40;"></div>
<div style="left:1171.5px;top:210px;width:5.3px;height:45px;background:#ced0d6;"></div>
<div style="left:3368px;top:210px;width:367px;height:55px;background:#1e1f22;border-radius:11px 11px 0 0;"></div>
<svg style="left:3380px;top:220px;" width="46" height="36" viewBox="0 0 46 36"><g fill="none" stroke="#6f737a" stroke-width="2.600"><path d="M3.500 18c5-8 12-12.500 19.500-12.500s14.500 4.500 19.500 12.500c-5 8-12 12.500-19.500 12.500s-14.500-4.500-19.500-12.500z"/><circle cx="23" cy="18" r="6.300"/></g></svg>
<div style="left:3458px;top:215px;width:3px;height:45px;background:#43454a;"></div>
<svg style="left:3488px;top:220px;" width="34" height="32" viewBox="0 0 34 32"><path d="M14.200 4.500q2.800-4 5.600 0l11.500 20.500q1.800 4.500-3 4.700h-22.600q-4.800-.200-3-4.700z" fill="#c9a44e"/><rect x="15.300" y="9.500" width="3.600" height="10.500" rx="1.800" fill="#1e1f22"/><circle cx="17.100" cy="24.200" r="2.300" fill="#1e1f22"/></svg>
<span style="top:219.09px;font-size:31.5px;color:#bcbec4;left:3527.5px;">1</span>
<svg style="left:3562px;top:220px;" width="36" height="38" viewBox="0 0 36 38"><path d="M5 14l8.500 8 16.500-18" fill="none" stroke="#57965c" stroke-width="4.600" stroke-linecap="round" stroke-linejoin="round"/><path d="M4.500 35l4.500-5 4.500 5 4.500-5 4.500 5 4.500-5 4.500 5" fill="none" stroke="#57965c" stroke-width="2.400" stroke-linecap="round" stroke-linejoin="round" transform="translate(0,-1.500)"/></svg>
<span style="top:219.09px;font-size:31.5px;color:#bcbec4;left:3602px;">4</span>
<svg style="left:3646px;top:230px;" width="24" height="16" viewBox="0 0 24 16"><path d="M2.500 13l9.500-9.500 9.500 9.500" fill="none" stroke="#bcbec4" stroke-width="2.700" stroke-linecap="round" stroke-linejoin="round"/></svg>
<svg style="left:3698px;top:230px;" width="24" height="16" viewBox="0 0 24 16"><path d="M2.500 3l9.500 9.500 9.500-9.500" fill="none" stroke="#bcbec4" stroke-width="2.700" stroke-linecap="round" stroke-linejoin="round"/></svg>
<div style="left:3717.8px;top:272.5px;width:20.6px;height:155.5px;background:#444547;"></div>
<div style="left:3705px;top:838px;width:35px;height:4.5px;background:#c29e4a;"></div>
<div style="left:985px;top:206px;width:72.500px;height:1177px;overflow:hidden"><div class="cl ln" style="position:absolute;right:0;top:-1px;color:#a1a3ab">1</div><div class="cl ln" style="position:absolute;right:0;top:54px;color:#4b5059">14</div><div class="cl ln" style="position:absolute;right:0;top:109px;color:#4b5059">15</div><div class="cl ln" style="position:absolute;right:0;top:164px;color:#4b5059">16</div><div class="cl ln" style="position:absolute;right:0;top:219px;color:#4b5059">17</div><div class="cl ln" style="position:absolute;right:0;top:274px;color:#4b5059">22</div><div class="cl ln" style="position:absolute;right:0;top:329px;color:#4b5059">23</div><div class="cl ln" style="position:absolute;right:0;top:384px;color:#4b5059">24</div><div class="cl ln" style="position:absolute;right:0;top:439px;color:#4b5059">25</div><div class="cl ln" style="position:absolute;right:0;top:494px;color:#4b5059">26</div><div class="cl ln" style="position:absolute;right:0;top:549px;color:#4b5059">27</div><div class="cl ln" style="position:absolute;right:0;top:604px;color:#4b5059">28</div><div class="cl ln" style="position:absolute;right:0;top:659px;color:#4b5059">29</div><div class="cl ln" style="position:absolute;right:0;top:714px;color:#4b5059">30</div><div class="cl ln" style="position:absolute;right:0;top:769px;color:#4b5059">31</div><div class="cl ln" style="position:absolute;right:0;top:824px;color:#4b5059">32</div><div class="cl ln" style="position:absolute;right:0;top:879px;color:#4b5059">33</div><div class="cl ln" style="position:absolute;right:0;top:934px;color:#4b5059">34</div><div class="cl ln" style="position:absolute;right:0;top:989px;color:#4b5059">35</div><div class="cl ln" style="position:absolute;right:0;top:1044px;color:#4b5059">36</div><div class="cl ln" style="position:absolute;right:0;top:1099px;color:#4b5059">37</div><div class="cl ln" style="position:absolute;right:0;top:1154px;color:#4b5059">38</div></div>
<div style="left:1172px;top:206px;width:2567px;height:1177px;overflow:hidden"><div class="cl" style="position:absolute;left:0;top:-1px"><span class="c" style="color:#868a91">/.../</span></div><div class="cl" style="position:absolute;left:0;top:109px"><span class="k">package</span> riscv</div><div class="cl" style="position:absolute;left:0;top:219px"><span class="k">import</span> <span style="color:#868a91">...</span></div><div class="cl" style="position:absolute;left:0;top:384px"><span class="k">class</span> FiveStageCPUStallTest <span class="k">extends</span> AnyFlatSpec <span class="k">with</span> ChiselScalatestTester {</div><div class="cl" style="position:absolute;left:0;top:439px">  <i>behavior</i> of <span class="s">"Five-stage Pipelined CPU with Stalling"</span></div><div class="cl" style="position:absolute;left:0;top:494px">  <i>it</i> should <span class="s">"calculate recursively fibonacci(10)"</span> in {</div><div class="cl" style="position:absolute;left:0;top:549px">    test(<span class="k">new</span> TestTopModule(<span class="s">"fibonacci.<u>asmbin</u>"</span>, ImplementationType.<i>FiveStageStall</i>)).withAnnotations(TestAnnotations.<i>annos</i>) { c =&gt;</div><div class="cl" style="position:absolute;left:0;top:604px">      <span class="k">for</span> (i &lt;- <span class="n">1</span><b class="h">≤</b> to <b class="h">≤</b><span class="n">50</span>) {</div><div class="cl" style="position:absolute;left:0;top:659px">        c.<i>clock</i>.step(<span class="n">1000</span>)</div><div class="cl" style="position:absolute;left:0;top:714px">        c.<i>io</i>.<i>mem_debug_read_address</i>.poke((i * <span class="n">4</span>).U) <span class="c">// Avoid timeout</span></div><div class="cl" style="position:absolute;left:0;top:769px">      }</div><div class="cl" style="position:absolute;left:0;top:879px">      c.<i>io</i>.<i>mem_debug_read_address</i>.poke(<span class="n">4</span>.U)</div><div class="cl" style="position:absolute;left:0;top:934px">      c.<i>clock</i>.step()</div><div class="cl" style="position:absolute;left:0;top:989px">      c.<i>io</i>.<i>mem_debug_read_data</i>.expect(<span class="n">55</span>.U)</div><div class="cl" style="position:absolute;left:0;top:1044px">    }</div><div class="cl" style="position:absolute;left:0;top:1099px">  }</div><div class="cl" style="position:absolute;left:0;top:1154px">  <i>it</i> should <span class="s">"quicksort 10 numbers"</span> in {</div></div>
<div style="left:1207.4px;top:755px;width:2.5px;height:550px;background:#313438;"></div>
<div style="left:1247.3px;top:810px;width:2.5px;height:440px;background:#313438;"></div>
<div style="left:1287.2px;top:865px;width:2.5px;height:110px;background:#313438;"></div>
<svg style="left:2727px;top:599px;" width="32" height="34" viewBox="0 0 32 34"><g fill="#43454a" stroke="#ced0d6" stroke-width="2.400" stroke-linejoin="round"><circle cx="15.300" cy="9.800" r="5.800"/><path d="M3.500 29.800q.800-10 11.800-10t11.800 10z"/></g></svg>
<span style="top:598.93px;font-size:30.5px;color:#7a7e85;left:2765px;letter-spacing:0.234px;">TOKISAKIX\21168</span>
<svg style="left:1127px;top:222.5px;" width="16" height="24" viewBox="0 0 16 24"><path d="M2.500 2.500l10 9.500-10 9.500" fill="none" stroke="#6f737a" stroke-width="2.500" stroke-linecap="round" stroke-linejoin="round"/></svg>
<svg style="left:1127px;top:442.5px;" width="16" height="24" viewBox="0 0 16 24"><path d="M2.500 2.500l10 9.500-10 9.500" fill="none" stroke="#6f737a" stroke-width="2.500" stroke-linecap="round" stroke-linejoin="round"/></svg>
<svg style="left:1193px;top:274px;" width="30" height="42" viewBox="0 0 30 42"><path d="M15 2.200a12 12 0 0 1 7.500 21.300q-1.800 1.600-2 4h-11q-.200-2.400-2-4a12 12 0 0 1 7.500-21.300z" fill="#f2c55c"/><path d="M9.800 30.800h10.400M9.800 34.800h10.400" stroke="#dfe1e5" stroke-width="2.300"/><path d="M11 38.500h8" stroke="#dfe1e5" stroke-width="2.300"/></svg>
<svg style="left:1072px;top:598px;" width="42" height="40" viewBox="0 0 42 40"><circle cx="16.700" cy="16" r="13.800" fill="#57965c"/><path d="M9.500 16.200l5 4.800 8.800-9.800" fill="none" stroke="#fff" stroke-width="3.200" stroke-linecap="round" stroke-linejoin="round"/><path d="M22 19.500v15.500q0 1.800 1.600.9l13-7.800q1.400-.9 0-1.800l-13-7.700q-1.600-.900-1.600.9z" fill="#253627" stroke="#1e1f22" stroke-width="5.500" stroke-linejoin="round"/><path d="M22 19.500v15.500q0 1.800 1.600.9l13-7.800q1.400-.9 0-1.800l-13-7.700q-1.600-.900-1.600.9z" fill="#253627" stroke="#5fad65" stroke-width="2.300" stroke-linejoin="round"/></svg>
<svg style="left:1074px;top:652.5px;" width="38" height="40" viewBox="0 0 38 40"><path d="M4.500 5.500v29q0 2.300 2 1.200l25-14.500q1.800-1.200 0-2.400l-25-14.500q-2-1.100-2 1.200z" fill="#253627" stroke="#5fad65" stroke-width="2.600" stroke-linejoin="round"/></svg>
<svg style="left:1074px;top:707.5px;" width="38" height="40" viewBox="0 0 38 40"><path d="M4.500 5.500v29q0 2.300 2 1.200l25-14.500q1.800-1.200 0-2.400l-25-14.500q-2-1.100-2 1.200z" fill="#253627" stroke="#5fad65" stroke-width="2.600" stroke-linejoin="round"/></svg>
<div style="left:1174px;top:1360px;width:2426px;height:20px;background:#424346;"></div>
<div style="left:985px;top:1381.5px;width:2754px;height:3px;background:#313438;"></div>
<svg style="left:1074px;top:1367px" width="38" height="14" viewBox="0 0 38 14"><path d="M4.500 8q0-3 3-1.500l12 7h-15z" fill="#253627" stroke="#5fad65" stroke-width="2.600" stroke-linejoin="round"/></svg>
<span style="top:1478.93px;font-size:30.5px;color:#dfe1e5;left:132.5px;font-weight:bold;letter-spacing:0.000px;">运行</span>
<svg style="left:266px;top:1476px;" width="44" height="44" viewBox="0 0 44 44"><g transform="translate(0.500,1) scale(0.830)"><path d="M2 19.700L17.600 4.600v30.300z" fill="#a0522d"/><path d="M22.700 5.300l16.100 17.700h-16.100z" fill="#4e7a3a"/>
<g fill="#a83232"><path d="M23.700 26.500l21.800-2.700v5l-21.800 2.700z"/><path d="M23.700 33.300l21.800-2.700v5l-21.800 2.700z"/><path d="M23.700 40.100l21.800-2.700v5l-21.800 2.700z"/></g></g></svg>
<span style="top:1477.59px;font-size:31.5px;color:#dfe1e5;left:314.6px;letter-spacing:-0.518px;">FiveStageCPUStallTest</span>
<svg style="left:657px;top:1485px;" width="26" height="26" viewBox="0 0 26 26"><path d="M4 4l17.500 17.500M21.500 4l-17.500 17.500" stroke="#868a91" stroke-width="2.600" stroke-linecap="round"/></svg>
<div style="left:232.5px;top:1540px;width:475px;height:7px;background:#5c5e66;border-radius:3.500px;"></div>
<div style="left:3620px;top:1479px;width:6px;height:6px;background:#ced0d6;border-radius:50%;"></div>
<div style="left:3620px;top:1492px;width:6px;height:6px;background:#ced0d6;border-radius:50%;"></div>
<div style="left:3620px;top:1504.6px;width:6px;height:6px;background:#ced0d6;border-radius:50%;"></div>
<div style="left:3672px;top:1493.7px;width:32px;height:2.8px;background:#ced0d6;border-radius:1.400px;"></div>
<svg style="left:126.0px;top:1560.3px;" width="60" height="60" viewBox="0 0 60 60"><g fill="none" stroke="#ced0d6" stroke-width="2.8" stroke-linecap="round" stroke-linejoin="round"><path d="M32 43.200a14 14 0 1 1 8.500-15"/><path d="M41.500 14.500v11.500h-11.500"/></g><circle cx="38.500" cy="40" r="12" fill="#2b2d30"/><path d="M30.8 31.2v16.34q0 1.72 1.462 0.86l12.47 -8.17q1.29 -0.86 0 -1.72l-12.47 -8.17q-1.462 -0.86 -1.462 0.86z" fill="#253627" stroke="#5fad65" stroke-width="2.500" stroke-linejoin="round"/></svg>
<svg style="left:190.0px;top:1560.3px;" width="60" height="60" viewBox="0 0 60 60"><g fill="none" stroke="#5a5d63" stroke-width="2.8" stroke-linecap="round" stroke-linejoin="round"><path d="M31 43.600a14 14 0 1 1 10.500-15.500"/><path d="M42 14.500v11.500h-11.500"/></g><circle cx="39" cy="38.700" r="11.500" fill="#2b2d30"/><circle cx="39" cy="38.700" r="8.800" fill="#5a5d63"/></svg>
<svg style="left:255.0px;top:1560.3px;" width="60" height="60" viewBox="0 0 60 60"><g fill="none" stroke="#ced0d6" stroke-width="2.8" stroke-linecap="round" stroke-linejoin="round"><path d="M26 16.500a14 14 0 0 0-5.500 24"/><path d="M14 41.500h8v-8"/><path d="M34 19a14 14 0 0 1 7 8.500"/><path d="M30.500 16h8.500M30.500 16v8.500" transform="rotate(8 34 19)"/></g><circle cx="38.500" cy="40" r="12" fill="#2b2d30"/><path d="M32 31.2v16.34q0 1.72 1.462 0.86l12.47 -8.17q1.29 -0.86 0 -1.72l-12.47 -8.17q-1.462 -0.86 -1.462 0.86z" fill="#253627" stroke="#5fad65" stroke-width="2.500" stroke-linejoin="round"/></svg>
<div style="left:333px;top:1575px;width:30px;height:30px;background:#5a5a5a;border-radius:5px;"></div>
<div style="left:388px;top:1565px;width:2.8px;height:50px;background:#43454a;"></div>
<svg style="left:400.0px;top:1560.3px;" width="60" height="60" viewBox="0 0 60 60"><g fill="none" stroke="#ced0d6" stroke-width="4" stroke-linecap="round" stroke-linejoin="round"><path d="M16 31l9.500 9 18-19.500"/></g></svg>
<div style="left:467.5px;top:1562.5px;width:55px;height:55px;background:#46474c;border-radius:11px;"></div>
<svg style="left:465.0px;top:1560.3px;" width="60" height="60" viewBox="0 0 60 60"><g fill="none" stroke="#ced0d6" stroke-width="3" stroke-linecap="round" stroke-linejoin="round"><circle cx="30" cy="30" r="16.200"/><path d="M18.500 41.500l23-23"/></g></svg>
<div style="left:535.3px;top:1565px;width:2.8px;height:50px;background:#43454a;"></div>
<svg style="left:548.0px;top:1560.3px;" width="60" height="60" viewBox="0 0 60 60"><g fill="none" stroke="#ced0d6" stroke-width="2.8" stroke-linecap="round" stroke-linejoin="round"><path d="M21 18v23.500M13 34l8 8 8-8"/><path d="M29 19h17M33 30h13M38 41h8"/></g><path d="M50.500 43.500v10h-10z" fill="#ced0d6"/></svg>
<svg style="left:613.0px;top:1560.3px;" width="60" height="60" viewBox="0 0 60 60"><g fill="none" stroke="#ced0d6" stroke-width="2.8" stroke-linecap="round" stroke-linejoin="round"><path d="M16.500 24v16q0 3 3 3h24"/><path d="M44.500 15.500l-17 17M27 21v12h12"/></g></svg>
<svg style="left:678.0px;top:1560.3px;" width="60" height="60" viewBox="0 0 60 60"><g fill="none" stroke="#ced0d6" stroke-width="3" stroke-linecap="round" stroke-linejoin="round"><circle cx="30" cy="30" r="16.200"/><path d="M30 21.500v9.500l6.500 3.800"/></g><path d="M52.500 43.500v10h-10z" fill="#ced0d6"/></svg>
<div style="left:748px;top:1565px;width:2.8px;height:50px;background:#43454a;"></div>
<svg style="left:760.0px;top:1560.3px;" width="60" height="60" viewBox="0 0 60 60"><g fill="none" stroke="#5a5d63" stroke-width="2.8" stroke-linecap="round" stroke-linejoin="round"><path d="M14.500 22.500h7l3-5.500h11l3 5.500h7q2.500 0 2.500 2.500v17q0 2.500-2.500 2.500h-31q-2.500 0-2.500-2.500v-17q0-2.500 2.500-2.500z"/><circle cx="30" cy="33" r="6.500"/></g><circle cx="41.500" cy="27.500" r="1.500" fill="#5a5d63"/></svg>
<svg style="left:826.5px;top:1560.3px;" width="60" height="60" viewBox="0 0 60 60"><g fill="none" stroke="#5a5d63" stroke-width="2.8" stroke-linecap="round" stroke-linejoin="round"><path d="M19.500 22v-6q0-3 3-3h20.500q3 0 3 3v28.500q0 3-3 3h-20.500q-3 0-3-3v-6"/><path d="M14.500 30.300h20.500M28.500 23l7 7.300-7 7.300"/></g></svg>
<svg style="left:890.0px;top:1560.3px;" width="60" height="60" viewBox="0 0 60 60"><g fill="none" stroke="#5a5d63" stroke-width="2.8" stroke-linecap="round" stroke-linejoin="round"><path d="M13.500 44.500q-2.500-4.500-2.500-9.500a19 19 0 0 1 38 0q0 5-2.500 9.500z"/><circle cx="27" cy="35" r="3.500"/><path d="M29.500 32.500l9-7"/></g><path d="M55.500 43.500v10h-10z" fill="#5a5d63"/></svg>
<div style="left:981.8px;top:1574.2px;width:6.4px;height:6.4px;background:#ced0d6;border-radius:50%;"></div>
<div style="left:981.8px;top:1587.1px;width:6.4px;height:6.4px;background:#ced0d6;border-radius:50%;"></div>
<div style="left:981.8px;top:1599.6px;width:6.4px;height:6.4px;background:#ced0d6;border-radius:50%;"></div>
<div style="left:132.7px;top:1645px;width:837px;height:60px;background:#43454a;border-radius:11px;"></div>
<svg style="left:142px;top:1668px;" width="24" height="16" viewBox="0 0 24 16"><path d="M2.500 3l9.500 9 9.500-9" fill="none" stroke="#9da0a8" stroke-width="2.700" stroke-linecap="round" stroke-linejoin="round"/></svg>
<svg style="left:186px;top:1660px;" width="38" height="32" viewBox="0 0 38 32"><path d="M6 16.500l9 8.500 16.500-17.500" fill="none" stroke="#57965c" stroke-width="5" stroke-linecap="round" stroke-linejoin="round"/></svg>
<span style="top:1658.93px;font-size:30.5px;color:#dfe1e5;left:232px;letter-spacing:0.000px;">测试结果</span>
<span style="top:1659.37px;font-size:27.8px;color:#dfe1e5;left:808.5px;letter-spacing:0.069px;">34秒 59毫秒</span>
<div style="left:1000px;top:1635px;width:2.8px;height:574px;background:#1e1f22;"></div>
<svg style="left:1014px;top:1660px;" width="38" height="32" viewBox="0 0 38 32"><path d="M6 16.500l9 8.500 16.500-17.500" fill="none" stroke="#57965c" stroke-width="5" stroke-linecap="round" stroke-linejoin="round"/></svg>
<span style="top:1658.43px;font-size:30.5px;color:#dfe1e5;left:1060px;letter-spacing:0.009px;">4 测试已通过</span>
<span style="top:1658.43px;font-size:30.5px;color:#6f737a;left:1268px;letter-spacing:0.192px;">总计 4 个测试，34秒 59毫秒</span>
<div style="left:1002.8px;top:1712px;width:2642px;height:497px;background:#1e1f22;"></div>
<div style="left:1002.8px;top:1712px;width:2642px;height:8.5px;background:#5f9a62;border-radius:4px;"></div>
<div style="left:1032px;top:1722px;width:1060px;height:55px;background:#393b40;"></div>
<div class="cl" style="left:1033px;top:1723px;color:#868a91">C:\Users\26586\.jdks\temurin-17.0.16\bin\java.exe ...</div>
<div class="cl" style="left:1033px;top:1778px;">Testing started at 18:07 ...</div>
<div style="left:3619px;top:1724.5px;width:21.6px;height:234.5px;background:#3c3d40;"></div>
<svg style="left:3668px;top:1740px;" width="50" height="50" viewBox="0 0 50 50"><g fill="none" stroke="#5a5d63" stroke-width="2.6" stroke-linecap="round" stroke-linejoin="round"><path d="M25 12v27M14.500 22.500l10.500-10.500 10.500 10.500"/></g></svg>
<svg style="left:3668px;top:1805px;" width="50" height="50" viewBox="0 0 50 50"><g fill="none" stroke="#5a5d63" stroke-width="2.6" stroke-linecap="round" stroke-linejoin="round"><path d="M25 11v27M14.500 27.500l10.500 10.500 10.500-10.500"/></g></svg>
<svg style="left:3668px;top:1872px;" width="50" height="50" viewBox="0 0 50 50"><g fill="none" stroke="#ced0d6" stroke-width="2.6" stroke-linecap="round" stroke-linejoin="round"><path d="M8 11h34M8 23.500h25.500q7 0 7 6t-7 6h-6M8 35.500h9"/><path d="M32 30l-5.500 5.500 5.500 5.500"/></g></svg>
<svg style="left:3668px;top:1934px;" width="50" height="50" viewBox="0 0 50 50"><g fill="none" stroke="#ced0d6" stroke-width="2.6" stroke-linecap="round" stroke-linejoin="round"><path d="M8 12.500h13M8 23.500h13M8 38h34"/><path d="M33.500 10v19M26 22l7.500 7.500 7.500-7.500"/></g></svg>
<svg style="left:3668px;top:2000px;" width="50" height="50" viewBox="0 0 50 50"><g fill="none" stroke="#ced0d6" stroke-width="2.6" stroke-linecap="round" stroke-linejoin="round"><path d="M15 18.500v-8h20v8"/><path d="M15 35.500h-3.500q-3 0-3-3v-11q0-3 3-3h27q3 0 3 3v11q0 3-3 3h-3.500"/><path d="M15 29.500h20v11h-20z"/></g><circle cx="36.500" cy="24" r="1.500" fill="#ced0d6"/></svg>
<svg style="left:3668px;top:2065px;" width="50" height="50" viewBox="0 0 50 50"><g fill="none" stroke="#ced0d6" stroke-width="2.6" stroke-linecap="round" stroke-linejoin="round"><path d="M19 16v-2.500a6 6 0 0 1 12 0v2.500M14 16h22M17.500 16v22q0 3 3 3h9q3 0 3-3v-22"/></g></svg>
<svg style="left:35px;top:2235px;" width="22" height="22" viewBox="0 0 22 22"><rect x="1.800" y="1.800" width="17.500" height="17.500" rx="4" fill="#25324d" stroke="#548af7" stroke-width="2.600"/></svg>
<span style="top:2224.09px;font-size:31.5px;color:#a8adb5;left:66px;letter-spacing:0.111px;">lab3</span>
<svg style="left:150px;top:2234px;" width="14" height="22" viewBox="0 0 14 22"><path d="M2 2l9 9-9 9" fill="none" stroke="#9da0a8" stroke-width="2.600" stroke-linecap="round" stroke-linejoin="round"/></svg>
<span style="top:2224.09px;font-size:31.5px;color:#a8adb5;left:189px;letter-spacing:-0.997px;">src</span>
<svg style="left:250px;top:2234px;" width="14" height="22" viewBox="0 0 14 22"><path d="M2 2l9 9-9 9" fill="none" stroke="#9da0a8" stroke-width="2.600" stroke-linecap="round" stroke-linejoin="round"/></svg>
<svg style="left:288px;top:2235px;" width="22" height="22" viewBox="0 0 22 22"><rect x="1.800" y="1.800" width="17.500" height="17.500" rx="4" fill="#25324d" stroke="#548af7" stroke-width="2.600"/></svg>
<span style="top:2224.09px;font-size:31.5px;color:#a8adb5;left:319px;letter-spacing:0.307px;">test</span>
<svg style="left:395px;top:2234px;" width="14" height="22" viewBox="0 0 14 22"><path d="M2 2l9 9-9 9" fill="none" stroke="#9da0a8" stroke-width="2.600" stroke-linecap="round" stroke-linejoin="round"/></svg>
<span style="top:2224.09px;font-size:31.5px;color:#a8adb5;left:434px;letter-spacing:-0.907px;">scala</span>
<svg style="left:528px;top:2234px;" width="14" height="22" viewBox="0 0 14 22"><path d="M2 2l9 9-9 9" fill="none" stroke="#9da0a8" stroke-width="2.600" stroke-linecap="round" stroke-linejoin="round"/></svg>
<span style="top:2224.09px;font-size:31.5px;color:#a8adb5;left:566px;letter-spacing:-0.548px;">riscv</span>
<svg style="left:653px;top:2234px;" width="14" height="22" viewBox="0 0 14 22"><path d="M2 2l9 9-9 9" fill="none" stroke="#9da0a8" stroke-width="2.600" stroke-linecap="round" stroke-linejoin="round"/></svg>
<svg style="left:697px;top:2227px;" width="30" height="38" viewBox="0 0 30 38"><path d="M2.600 10.500q0-3 3-3.400l21-5.200v25q0 3.200-3.200 3.800l-20.800 5.100z" fill="#402929" stroke="#db5c5c" stroke-width="2.600" stroke-linejoin="round"/><path d="M2.600 17.800l24-5.800M2.600 27l24-5.800" stroke="#db5c5c" stroke-width="2.600" fill="none"/></svg>
<span style="top:2224.09px;font-size:31.5px;color:#a8adb5;left:741px;letter-spacing:-0.580px;">FiveStageCPUStallTest.scala</span>
<svg style="left:3032px;top:2228.5px;" width="46" height="42" viewBox="0 0 46 42"><path d="M20 6.500c2.200-2.200 5-2.600 8-1.800 3.700 1 4.800 3.300 4.800 7v2.600c1.500 1 2.700 2.500 3.500 4-6 0-11.500 4.500-11.800 11.500-1.500.4-3 .6-4.500.6-7.700 0-17.300-5.500-17.300-13.600 0-3 2.200-5.500 4.400-7v-2.600c0-3.700 1.100-6 4.800-7 3-.8 5.900-.4 8.100 1.800z" fill="#ced0d6"/><path d="M12.700 8c2.600-.6 4.800.2 4.800 2.600v1.800c0 2.200-1.800 3.700-4.800 3.700-2.600 0-3-1.300-3-3.700 0-2.600.6-3.800 3-4.400zM27.300 8c-2.600-.6-4.800.2-4.800 2.600v1.800c0 2.200 1.800 3.700 4.800 3.700 2.600 0 3-1.300 3-3.700 0-2.600-.6-3.800-3-4.400z" fill="#2b2d30"/><path d="M8.600 19.500c3.300 1.100 8.500.4 11.400-2.200 2 1.700 4.800 2.700 7.600 2.700-2 2-3.300 5-3.300 8.500-1.500.3-3 .5-4.300.5-3.700 0-8.100-1.100-11.400-3.700z" fill="#2b2d30"/><rect x="14.800" y="21.500" width="3" height="6" rx="1.500" fill="#ced0d6"/><circle cx="28.500" cy="24.500" r="11.500" fill="#2b2d30"/><circle cx="28.500" cy="24.500" r="9.700" fill="#2fb344"/><path d="M24.200 24.700l3 3 5.500-6" fill="none" stroke="#fff" stroke-width="2.200" stroke-linecap="round" stroke-linejoin="round"/></svg>
<div style="left:3120px;top:2230.5px;width:27px;height:29px;background:#253627;"></div>
<svg style="left:3113px;top:2226px;" width="40" height="38" viewBox="0 0 40 38"><path d="M9.500 5.300h-5.500v28h5.500M30.500 5.300h5.500v28h-5.500" fill="none" stroke="#57965c" stroke-width="2.600" stroke-linejoin="round"/></svg>
<span style="top:2225.64px;font-size:27px;color:#ced0d6;left:3125px;">T</span>
<svg style="left:3192px;top:2224px;" width="42" height="42" viewBox="0 0 42 42"><g fill="none" stroke="#ced0d6" stroke-width="2.6" stroke-linecap="round" stroke-linejoin="round"><circle cx="21" cy="21" r="16.500"/><circle cx="20.500" cy="22" r="3"/><path d="M22.800 19.600l6-6.300"/></g></svg>
<span style="top:2224.09px;font-size:31.5px;color:#a8adb5;left:3274.5px;letter-spacing:-2.596px;">1:1</span>
<span style="top:2224.09px;font-size:31.5px;color:#a8adb5;left:3356px;letter-spacing:-4.130px;">LF</span>
<span style="top:2224.09px;font-size:31.5px;color:#a8adb5;left:3425px;letter-spacing:-0.848px;">UTF-8</span>
<svg style="left:3553.5px;top:2224px;" width="42" height="44" viewBox="0 0 42 44"><g fill="none" stroke="#ced0d6" stroke-width="2.6" stroke-linecap="round" stroke-linejoin="round"><path d="M13.500 35.500h-5.500q-3 0-3-3v-20l8-8h13q3 0 3 3v10"/><path d="M13 5v5.500q0 2.500-2.500 2.500h-5"/></g><path d="M33.30 31.00 L33.30 31.30 L33.30 31.60 L33.33 31.90 L33.46 32.23 L33.83 32.63 L34.52 33.15 L35.17 33.73 L35.46 34.26 L35.47 34.71 L35.36 35.13 L35.19 35.52 L34.99 35.90 L34.76 36.26 L34.50 36.60 L34.20 36.91 L33.80 37.13 L33.20 37.14 L32.37 36.87 L31.57 36.54 L31.04 36.42 L30.70 36.47 L30.42 36.59 L30.16 36.74 L29.90 36.89 L29.64 37.04 L29.39 37.19 L29.14 37.37 L28.92 37.64 L28.76 38.16 L28.65 39.02 L28.47 39.88 L28.15 40.39 L27.77 40.62 L27.35 40.73 L26.93 40.78 L26.50 40.80 L26.07 40.78 L25.65 40.73 L25.23 40.62 L24.85 40.39 L24.53 39.88 L24.35 39.02 L24.24 38.16 L24.08 37.64 L23.86 37.37 L23.61 37.19 L23.36 37.04 L23.10 36.89 L22.84 36.74 L22.58 36.59 L22.30 36.47 L21.96 36.42 L21.43 36.54 L20.63 36.87 L19.80 37.14 L19.20 37.13 L18.80 36.91 L18.50 36.60 L18.24 36.26 L18.01 35.90 L17.81 35.52 L17.64 35.13 L17.53 34.71 L17.54 34.26 L17.83 33.73 L18.48 33.15 L19.17 32.63 L19.54 32.23 L19.67 31.90 L19.70 31.60 L19.70 31.30 L19.70 31.00 L19.70 30.70 L19.70 30.40 L19.67 30.10 L19.54 29.77 L19.17 29.37 L18.48 28.85 L17.83 28.27 L17.54 27.74 L17.53 27.29 L17.64 26.87 L17.81 26.48 L18.01 26.10 L18.24 25.74 L18.50 25.40 L18.80 25.09 L19.20 24.87 L19.80 24.86 L20.63 25.13 L21.43 25.46 L21.96 25.58 L22.30 25.53 L22.58 25.41 L22.84 25.26 L23.10 25.11 L23.36 24.96 L23.61 24.81 L23.86 24.63 L24.08 24.36 L24.24 23.84 L24.35 22.98 L24.53 22.12 L24.85 21.61 L25.23 21.38 L25.65 21.27 L26.07 21.22 L26.50 21.20 L26.93 21.22 L27.35 21.27 L27.77 21.38 L28.15 21.61 L28.47 22.12 L28.65 22.98 L28.76 23.84 L28.92 24.36 L29.14 24.63 L29.39 24.81 L29.64 24.96 L29.90 25.11 L30.16 25.26 L30.42 25.41 L30.70 25.53 L31.04 25.58 L31.57 25.46 L32.37 25.13 L33.20 24.86 L33.80 24.87 L34.20 25.09 L34.50 25.40 L34.76 25.74 L34.99 26.10 L35.19 26.48 L35.36 26.87 L35.47 27.29 L35.46 27.74 L35.17 28.27 L34.52 28.85 L33.83 29.37 L33.46 29.77 L33.33 30.10 L33.30 30.40 L33.30 30.70z" fill="#43454a" stroke="#ced0d6" stroke-width="2.300" stroke-linejoin="round"/><circle cx="26.500" cy="31" r="2.100" fill="#ced0d6"/></svg>
<span style="top:2225.93px;font-size:30.5px;color:#a8adb5;left:3600px;letter-spacing:0.013px;">2 个空格</span>
<svg style="left:3762px;top:2224px;" width="40" height="42" viewBox="0 0 40 42"><g fill="none" stroke="#ced0d6" stroke-width="2.8" stroke-linecap="round" stroke-linejoin="round"><rect x="5.500" y="19" width="22" height="17.500" rx="3.500"/><path d="M16.500 25.500v5"/><path d="M20.500 19v-5.500q0-7.500 7-7.500t7 6.500"/></g></svg>
<div style="left:3554px;top:2077.500px;width:285px;height:119px;background:#0a0a0c;border-radius:22px;overflow:hidden;">
<svg style="position:absolute;left:0;top:0" width="285" height="119" viewBox="0 0 285 119">
<defs><filter id="bl" x="-10%" y="-10%" width="120%" height="120%"><feGaussianBlur stdDeviation="0.900"/></filter>
<filter id="bl2" x="-20%" y="-20%" width="140%" height="140%"><feGaussianBlur stdDeviation="2.500"/></filter>
<radialGradient id="kg" cx=".78" cy=".62" r=".55"><stop offset="0" stop-color="#2c2c30"/><stop offset=".55" stop-color="#17171a"/><stop offset="1" stop-color="#0a0a0c"/></radialGradient></defs>
<rect x="60" y="5" width="222" height="109" fill="url(#kg)"/>
<g filter="url(#bl2)"><ellipse cx="68" cy="100" rx="20" ry="13" fill="#5a3a14" opacity=".75"/><ellipse cx="84" cy="104" rx="10" ry="8" fill="#7a5a1c" opacity=".6"/></g>
<g fill="none" stroke="#77777c" stroke-width="1.600" opacity=".7" filter="url(#bl)"><path d="M166 80q14 30 52 34"/><path d="M176 84q10 20 36 22"/><path d="M232 70q22-2 44-22"/><path d="M236 82q24-2 42-18"/><path d="M240 94q22 0 38-12"/><path d="M120 104q14 10 38 8"/></g>
<g filter="url(#bl)">
<path d="M58 6c16 2 34 8 52 15 18 7 36 14 46 21 8 5 11 11 8 14-4 4-14 3-26-2-14-6-28-14-42-24-14-10-28-18-38-24z" fill="#ece2d6"/>
<path d="M78 12c10 3 18 8 24 13l-6 8c-8-7-14-13-22-19zM110 28c6-3 14 0 22 4 8 4 14 3 20 8 6 4 9 9 6 12-6 2-16 0-26-6-10-5-18-11-22-18z" fill="#e8571f"/>
<path d="M128 34c4 0 8 2 10 5-3 2-7 1-10-5zM146 46c3 0 6 2 8 4-3 1-6 0-8-4z" fill="#f3ece2"/>
<path d="M140 28l7-9 3 12z" fill="#e9e2d8"/><path d="M120 52c4-3 10-2 14 1-5 3-10 3-14-1z" fill="#b9b0b8"/>
<path d="M191 6c6 8 14 22 22 40 8 18 14 36 14 46 0 7-6 9-12 4-8-8-12-22-15-40-3-20-6-38-9-50z" fill="#e8521b"/>
<path d="M192 7c5 8 10 18 14 30-4 3-8 0-9-7-2-9-4-17-5-23z" fill="#f3ebe0"/>
<path d="M203 52c5 0 10 5 12 11-5 1-10-3-12-11zM210 78c4 1 8 5 9 10-4 0-8-4-9-10z" fill="#f1e6da"/>
<path d="M202 6c14 0 30 2 44 2 6 10 10 24 12 40-8-4-14-12-20-22-2 8-8 12-16 8-8-8-15-18-20-28z" fill="#ec9a5c"/>
<path d="M212 8c8 2 16 3 22 3 2 6 0 12-4 14-7-4-13-10-18-17z" fill="#f6efe6"/>
<path d="M236 12c6 8 10 18 12 28-6-4-10-12-14-20zM206 10c4 6 10 12 14 18-6 0-12-8-14-18z" fill="#e8601f"/>
</g>
<g fill="#8d8d95" opacity=".55" filter="url(#bl)"><circle cx="130" cy="14" r="1.300"/><circle cx="142" cy="20" r="1"/><circle cx="160" cy="12" r="1.200"/><circle cx="172" cy="26" r="1"/><circle cx="150" cy="78" r="1.200"/><circle cx="118" cy="70" r="1"/><circle cx="182" cy="50" r="1.200"/><circle cx="262" cy="30" r="1.200"/><circle cx="270" cy="60" r="1"/><circle cx="240" cy="104" r="1.200"/><circle cx="96" cy="84" r="1"/><circle cx="188" cy="96" r="1.100"/></g>
<g fill="#fff8e8" filter="url(#bl)"><path d="M101 45l1.800 5.200 5.200 1.800-5.200 1.800-1.800 5.200-1.800-5.200-5.200-1.800 5.200-1.800z"/><path d="M174 66l1.500 4.500 4.500 1.500-4.500 1.500-1.500 4.500-1.500-4.500-4.500-1.500 4.500-1.500z"/><path d="M227 53l1.800 5.200 5.200 1.800-5.200 1.800-1.800 5.200-1.800-5.200-5.200-1.800 5.200-1.800z"/><path d="M257 82l2.200 6.400 6.400 2.200-6.400 2.200-2.200 6.400-2.200-6.400-6.400-2.200 6.400-2.200z"/></g>
<path d="M23.800 56.500l9-9q8.100 6 16.200 0l9 9-6.500 6.500-3.500-2.500v12.700h-14.200v-12.700l-3.500 2.500z" fill="#fff"/>
<text x="27.500" y="33" font-family="'Noto Sans CJK SC','WenQuanYi Zen Hei',sans-serif" font-size="31" fill="#fff">中</text>
<text x="23" y="113" font-family="'Liberation Sans',sans-serif" font-weight="bold" font-style="italic" font-size="37" fill="#c0532f" textLength="32" lengthAdjust="spacingAndGlyphs">S</text>
</svg></div>
</div></body></html>
